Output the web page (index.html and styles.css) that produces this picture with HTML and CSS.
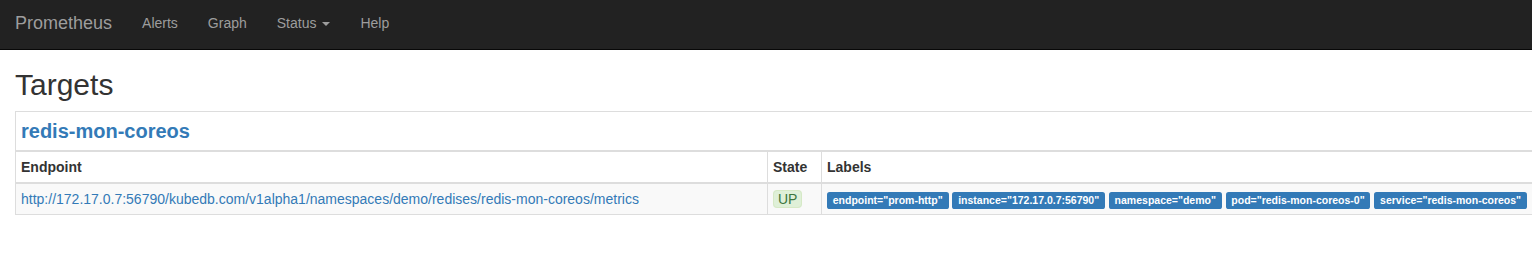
FILE: index.html
```html
<!DOCTYPE html>
<html lang="en">
<head>
<meta charset="utf-8">
<title>Prometheus Time Series Collection and Processing Server</title>
<link rel="stylesheet" href="styles.css">
</head>
<body>
<nav class="navbar">
  <div class="navbar-inner">
    <a class="brand" href="#">Prometheus</a>
    <ul class="nav">
      <li><a href="#">Alerts</a></li>
      <li><a href="#">Graph</a></li>
      <li><a href="#">Status <span class="caret"></span></a></li>
      <li><a href="#">Help</a></li>
    </ul>
  </div>
</nav>
<main class="container">
  <h2 class="page-title">Targets</h2>
  <table class="targets">
    <colgroup>
      <col class="col-endpoint">
      <col class="col-state">
      <col class="col-labels">
    </colgroup>
    <thead>
      <tr class="job-header">
        <th colspan="3"><h2 class="job-title"><a href="#job-redis-mon-coreos" id="job-redis-mon-coreos">redis-mon-coreos</a></h2></th>
      </tr>
      <tr class="job-details">
        <th>Endpoint</th>
        <th>State</th>
        <th>Labels</th>
      </tr>
    </thead>
    <tbody>
      <tr class="striped">
        <td><a href="#">http://172.17.0.7:56790/kubedb.com/v1alpha1/namespaces/demo/redises/redis-mon-coreos/metrics</a></td>
        <td><span class="state-up">UP</span></td>
        <td class="labels"><span class="label">endpoint="prom-http"</span> <span class="label">instance="172.17.0.7:56790"</span> <span class="label">namespace="demo"</span> <span class="label">pod="redis-mon-coreos-0"</span> <span class="label">service="redis-mon-coreos"</span></td>
      </tr>
    </tbody>
  </table>
</main>
</body>
</html>
```
FILE: styles.css
```css
html, body {
  overflow: hidden;
}
body {
  margin: 0;
  font-family: "Liberation Sans", Arial, Helvetica, sans-serif;
  font-size: 14px;
  line-height: 20px;
  color: #333;
  background: #fff;
}
a {
  color: #337ab7;
  text-decoration: none;
}

.navbar {
  box-sizing: border-box;
  height: 50px;
  background: #222;
  border-bottom: 1px solid #080808;
}
.navbar-inner {
  display: flex;
  align-items: flex-start;
  padding: 0 15px 0 0;
}
.brand {
  display: block;
  padding: 13px 15px 17px;
  font-size: 18px;
  line-height: 20px;
  color: #9d9d9d;
}
.nav {
  display: flex;
  margin: 0;
  padding: 0;
  list-style: none;
}
.nav a {
  display: block;
  padding: 13px 15px 17px;
  line-height: 20px;
  color: #9d9d9d;
}
.caret {
  display: inline-block;
  width: 0;
  height: 0;
  margin-left: 2px;
  vertical-align: middle;
  border-top: 4px solid;
  border-right: 4px solid transparent;
  border-left: 4px solid transparent;
}

.container {
  padding: 0 15px;
}
.page-title {
  margin: 18px 0 10px;
  font-size: 30px;
  font-weight: 500;
  line-height: 33px;
  color: #333;
}

.targets {
  border-collapse: collapse;
  border-spacing: 0;
  table-layout: fixed;
  width: 1566px;
  border: 1px solid #ddd;
}
.col-endpoint { width: 752px; }
.col-state { width: 54px; }
.col-labels { width: 760px; }

.targets th,
.targets td {
  padding: 5px;
  border: 1px solid #ddd;
  line-height: 20px;
  text-align: left;
  white-space: nowrap;
  overflow: hidden;
}
.targets th {
  vertical-align: bottom;
  font-weight: bold;
  border-bottom-width: 2px;
}
.targets td {
  vertical-align: top;
}
.job-title {
  margin: 0;
  font-size: 20px;
  line-height: 28px;
  font-weight: bold;
}
.striped td {
  background: #f9f9f9;
}

.state-up {
  padding: 0 4px;
  color: #3c763d;
  background: #dff0d8;
  border: 1px solid #d6e9c6;
  border-radius: 4px;
}
.label {
  display: inline;
  padding: .2em .55em .3em;
  font-size: 75%;
  font-weight: bold;
  line-height: 1;
  color: #fff;
  background: #337ab7;
  border-radius: .25em;
  white-space: nowrap;
  vertical-align: baseline;
}
```
